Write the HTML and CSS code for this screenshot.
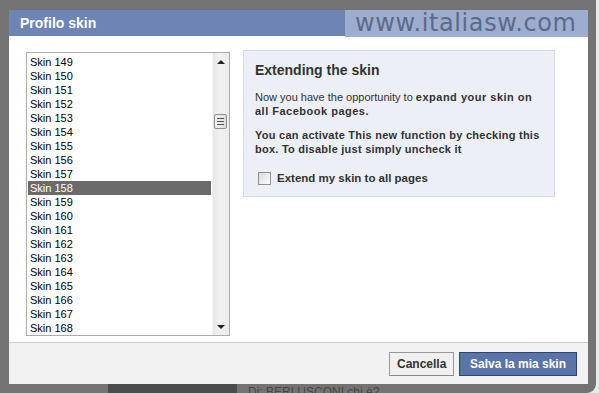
FILE: index.html
```html
<!DOCTYPE html>
<html lang="it">
<head>
    <meta charset="UTF-8">
    <meta name="viewport" content="width=device-width, initial-scale=1.0">
    <title>Profilo skin</title>
    <link rel="stylesheet" href="styles.css">
</head>
<body>

    <!-- Page behind the dialog -->
    <div class="page">
        <div class="page-feed">
            <div class="feed-thumb"></div>
            <div class="feed-text">Di: BERLUSCONI chi è?</div>
        </div>
    </div>

    <!-- Dialog -->
    <div class="overlay">
        <div class="dialog">
            <div class="dialog-title">Profilo skin</div>

            <div class="dialog-body">
                <div class="skin-list">
                    <ul class="skin-items">
                        <li>Skin 149</li>
                        <li>Skin 150</li>
                        <li>Skin 151</li>
                        <li>Skin 152</li>
                        <li>Skin 153</li>
                        <li>Skin 154</li>
                        <li>Skin 155</li>
                        <li>Skin 156</li>
                        <li>Skin 157</li>
                        <li class="selected">Skin 158</li>
                        <li>Skin 159</li>
                        <li>Skin 160</li>
                        <li>Skin 161</li>
                        <li>Skin 162</li>
                        <li>Skin 163</li>
                        <li>Skin 164</li>
                        <li>Skin 165</li>
                        <li>Skin 166</li>
                        <li>Skin 167</li>
                        <li>Skin 168</li>
                    </ul>
                    <div class="scrollbar">
                        <div class="scroll-btn"><span class="arrow-up"></span></div>
                        <div class="scroll-track">
                            <div class="scroll-thumb">
                                <span></span><span></span><span></span>
                            </div>
                        </div>
                        <div class="scroll-btn"><span class="arrow-down"></span></div>
                    </div>
                </div>

                <div class="info-panel">
                    <h3>Extending the skin</h3>
                    <p>Now you have the opportunity to <b class="wide">expand your skin on all Facebook pages.</b></p>
                    <p><b>You can activate This new function by checking this box. To disable just simply uncheck it</b></p>
                    <label class="check-row">
                        <span class="checkbox"></span>
                        Extend my skin to all pages
                    </label>
                </div>
            </div>

            <div class="dialog-footer">
                <button class="btn btn-cancel">Cancella</button>
                <button class="btn btn-save">Salva la mia skin</button>
            </div>
        </div>

        <!-- watermark laid over the title bar -->
        <div class="watermark">www.italiasw.com</div>
    </div>

</body>
</html>
```

FILE: styles.css
```css
* {
    margin: 0;
    padding: 0;
    box-sizing: border-box;
}

body {
    font-family: "Liberation Sans", Arial, sans-serif;
    font-size: 11px;
    color: #333;
    background-color: #e9e9e9;
    width: 599px;
    height: 393px;
    overflow: hidden;
}

/* page behind */
.page {
    padding-top: 383px;
}

.page-feed {
    display: flex;
    align-items: flex-start;
    padding-left: 108px;
}

.feed-thumb {
    width: 129px;
    height: 20px;
    background-color: #2f3236;
}

.feed-text {
    margin-left: 11px;
    padding-top: 2px;
    font-size: 12px;
    color: #1a1a1a;
}

/* overlay frame */
.overlay {
    position: absolute;
    left: 0;
    top: 0;
    width: 596px;
    height: 393px;
    padding: 10px 8px 9px 9px;
    background-color: rgba(82, 82, 82, 0.78);
    border-radius: 0 0 9px 0;
}

.dialog {
    display: flex;
    flex-direction: column;
    height: 100%;
    background-color: #fff;
}

.dialog-title {
    height: 26px;
    line-height: 26px;
    padding-left: 11px;
    background-color: #6d84b4;
    color: #fff;
    font-size: 14px;
    font-weight: bold;
}

.watermark {
    position: absolute;
    left: 345px;
    top: 10px;
    width: 243px;
    height: 27px;
    background-color: #9dadd0;
    color: #5c6a88;
    font-family: "DejaVu Sans", sans-serif;
    font-size: 24px;
    line-height: 26px;
    padding-left: 10px;
    letter-spacing: 0.6px;
}

.dialog-body {
    flex: 1;
    display: flex;
    align-items: flex-start;
    gap: 13px;
    padding: 14px 0 0 17px;
}

/* skin list box */
.skin-list {
    display: flex;
    width: 204px;
    height: 284px;
    margin-top: 2px;
    border: 1px solid #abadb3;
    background-color: #fff;
}

.skin-items {
    flex: 1;
    list-style: none;
    padding-top: 2px;
}

.skin-items li {
    height: 14px;
    line-height: 14px;
    margin: 0 1px;
    padding-left: 2px;
    color: #000;
    white-space: nowrap;
}

.skin-items li.selected {
    background-color: #6b6b6b;
    color: #fff;
}

.scrollbar {
    width: 17px;
    display: flex;
    flex-direction: column;
    background: linear-gradient(to right, #e6e6e6 0%, #f1f1f1 40%, #ececec 100%);
    border-left: 1px solid #f4f4f4;
}

.scroll-btn {
    height: 17px;
    display: flex;
    justify-content: center;
    align-items: center;
}

.arrow-up {
    width: 0;
    height: 0;
    border-left: 4px solid transparent;
    border-right: 4px solid transparent;
    border-bottom: 4px solid #222;
}

.arrow-down {
    width: 0;
    height: 0;
    border-left: 4px solid transparent;
    border-right: 4px solid transparent;
    border-top: 4px solid #222;
}

.scroll-track {
    flex: 1;
}

.scroll-thumb {
    width: 13px;
    height: 15px;
    margin: 44px 0 0 1px;
    border: 1px solid #8e8f8f;
    border-radius: 2px;
    background: linear-gradient(to right, #f3f3f3, #dcdcdc);
    display: flex;
    flex-direction: column;
    justify-content: center;
    align-items: center;
    gap: 2px;
}

.scroll-thumb span {
    width: 7px;
    height: 1px;
    background-color: #555;
}

/* info panel */
.info-panel {
    width: 312px;
    padding: 10px 10px 11px 11px;
    background-color: #eceff6;
    border: 1px solid #d4dae8;
}

.info-panel h3 {
    font-size: 14px;
    line-height: 18px;
    color: #333;
    margin-bottom: 11px;
}

.info-panel p {
    line-height: 14px;
    margin-bottom: 10px;
}

.info-panel p b {
    letter-spacing: 0.25px;
}

.info-panel p b.wide {
    letter-spacing: 0.5px;
}

.check-row {
    display: flex;
    align-items: center;
    gap: 6px;
    padding-left: 3px;
    margin-top: 15px;
    font-weight: bold;
    font-size: 11.5px;
    line-height: 14px;
}

.checkbox {
    width: 13px;
    height: 13px;
    border: 1px solid #8f8f8f;
    background: linear-gradient(135deg, #dcdcdc, #fbfbfb);
}

/* footer */
.dialog-footer {
    height: 42px;
    display: flex;
    justify-content: flex-end;
    align-items: flex-start;
    gap: 5px;
    padding: 9px 11px 0 0;
    background-color: #f2f2f2;
    border-top: 1px solid #ccc;
}

.btn {
    height: 24px;
    font-family: "Liberation Sans", Arial, sans-serif;
    font-size: 12px;
    font-weight: bold;
    padding: 0 7px;
    cursor: pointer;
}

.btn-cancel {
    width: 65px;
    color: #333;
    background-color: #f0f0f0;
    border: 1px solid #999;
    border-bottom-color: #888;
}

.btn-save {
    width: 118px;
    color: #fff;
    background-color: #5b74a8;
    border: 1px solid #29447e;
}
```
